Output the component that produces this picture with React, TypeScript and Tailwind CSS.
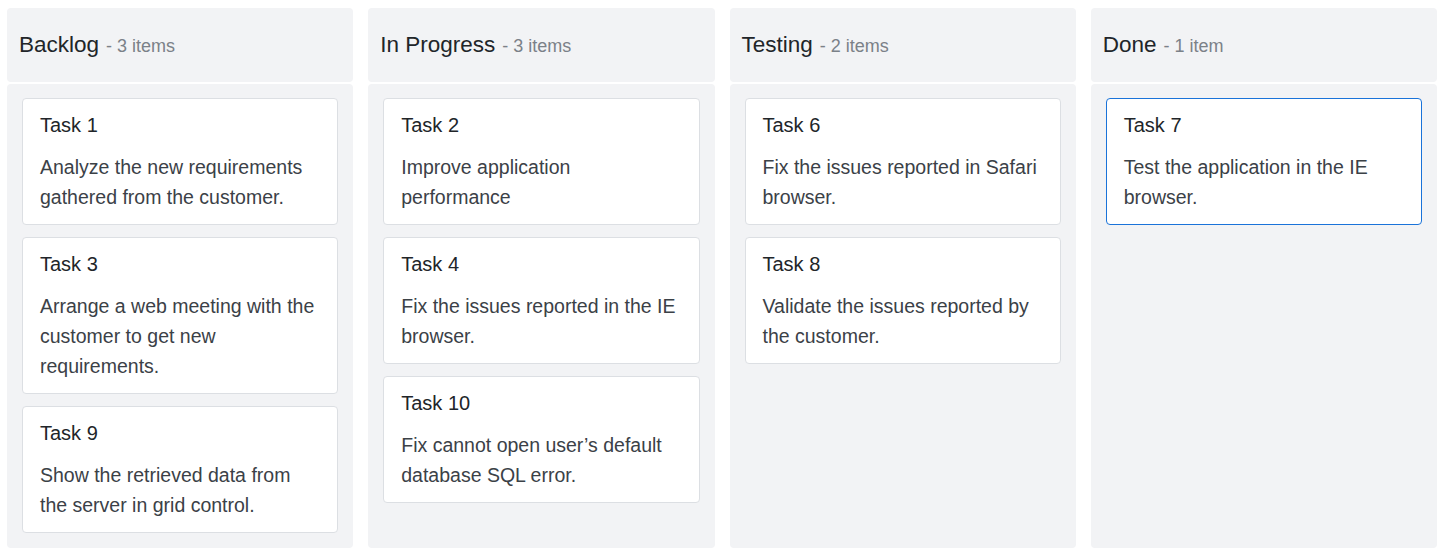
import type { FC } from "react";

interface Card {
  id: string;
  title: string;
  summary: string;
  selected?: boolean;
}

interface Column {
  key: string;
  title: string;
  cards: Card[];
}

const columns: Column[] = [
  {
    key: "Open",
    title: "Backlog",
    cards: [
      { id: "1", title: "Task 1", summary: "Analyze the new requirements gathered from the customer." },
      { id: "3", title: "Task 3", summary: "Arrange a web meeting with the customer to get new requirements." },
      { id: "9", title: "Task 9", summary: "Show the retrieved data from the server in grid control." },
    ],
  },
  {
    key: "InProgress",
    title: "In Progress",
    cards: [
      { id: "2", title: "Task 2", summary: "Improve application performance" },
      { id: "4", title: "Task 4", summary: "Fix the issues reported in the IE browser." },
      { id: "10", title: "Task 10", summary: "Fix cannot open user’s default database SQL error." },
    ],
  },
  {
    key: "Testing",
    title: "Testing",
    cards: [
      { id: "6", title: "Task 6", summary: "Fix the issues reported in Safari browser." },
      { id: "8", title: "Task 8", summary: "Validate the issues reported by the customer." },
    ],
  },
  {
    key: "Close",
    title: "Done",
    cards: [{ id: "7", title: "Task 7", summary: "Test the application in the IE browser.", selected: true }],
  },
];

const KanbanCard: FC<{ card: Card }> = ({ card }) => (
  <div
    className={`rounded-[4px] border bg-white pl-[17px] pr-[16px] pt-[11px] pb-[12px] ${
      card.selected ? "border-[#1a73d9]" : "border-[#dcdfe3]"
    }`}
  >
    <p className="text-[20px] leading-[30px] text-[#212529]">{card.title}</p>
    <p className="mt-3 text-[19.5px] leading-[30px] text-[#3b4147]">{card.summary}</p>
  </div>
);

export default function App() {
  return (
    <div
      className="grid h-[554px] grid-cols-4 gap-[15px] bg-white pt-2 pb-[6px] pl-[7px] pr-[5px]"
      style={{ fontFamily: '"Liberation Sans", Arial, sans-serif' }}
    >
      {columns.map((col) => (
        <div key={col.key} className="flex flex-col gap-[2px]">
          {/* header */}
          <div className="flex h-[74px] shrink-0 items-center rounded-[4px] bg-[#f2f3f5] pl-3">
            <span className="text-[22.5px] text-[#212529]">{col.title}</span>
            <span className="ml-[7px] pt-[2px] text-[18px] text-[#7b8188]">
              - {col.cards.length} {col.cards.length === 1 ? "item" : "items"}
            </span>
          </div>
          {/* cards */}
          <div className="flex flex-1 flex-col gap-[12px] rounded-[4px] bg-[#f2f3f5] pt-[14px] pl-[15px] pr-[15px]">
            {col.cards.map((card) => (
              <KanbanCard key={card.id} card={card} />
            ))}
          </div>
        </div>
      ))}
    </div>
  );
}
